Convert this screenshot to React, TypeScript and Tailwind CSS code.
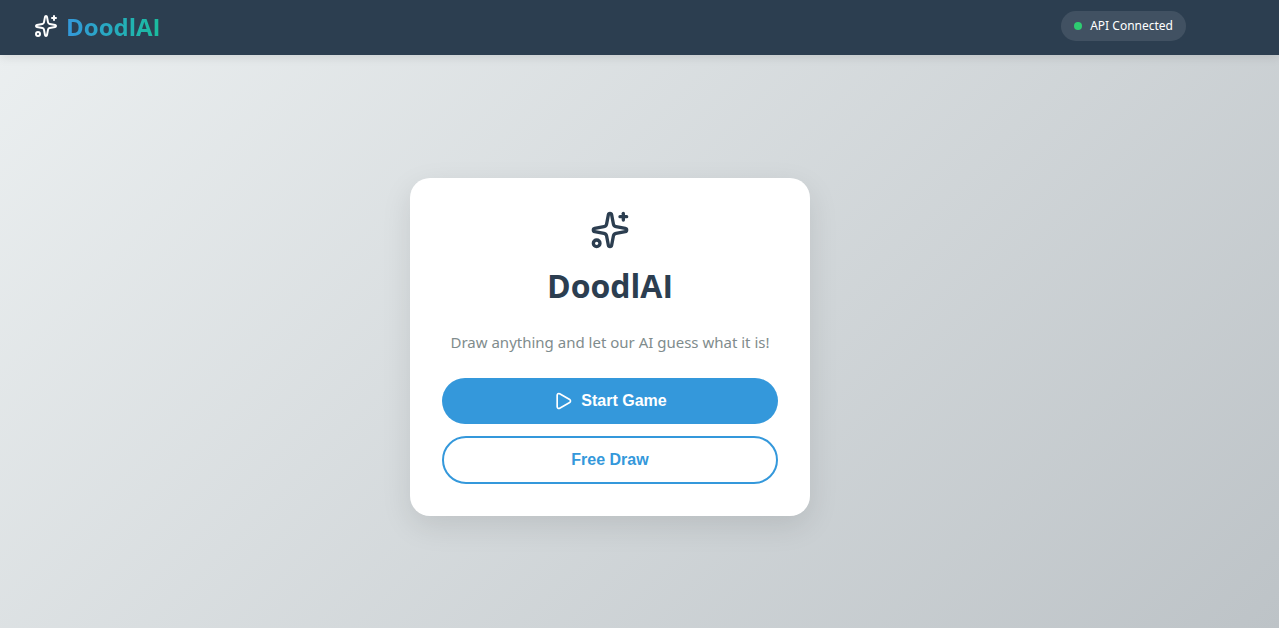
import { Play, Sparkles } from "lucide-react";

function Header() {
  return (
    <header className="relative flex h-[55px] items-center justify-between bg-[#2c3e50] pl-[34px] pr-[93px] pb-[3px] shadow-[0_2px_10px_rgba(0,0,0,0.1)]">
      <div className="flex items-center gap-2">
        <Sparkles size={24} className="text-white" aria-hidden="true" />
        <span className="bg-linear-to-r from-[#3498db] to-[#1abc9c] bg-clip-text pt-[2px] text-2xl font-bold text-transparent">
          DoodlAI
        </span>
      </div>
      <div className="flex h-[30px] items-center gap-2 rounded-full bg-white/10 px-[13px] font-['Noto_Sans',sans-serif] text-xs text-white">
        <span className="size-2 rounded-full bg-[#2ecc71]" />
        <span>API Connected</span>
      </div>
    </header>
  );
}

function WelcomeCard() {
  return (
    <section className="flex w-full max-w-[400px] flex-col items-center rounded-[20px] bg-white p-8 text-center shadow-[0_10px_30px_rgba(0,0,0,0.1)]">
      <Sparkles size={40} className="text-[#2c3e50]" aria-hidden="true" />
      <h1 className="mt-4 text-[32px] leading-10 font-bold text-[#2c3e50]">DoodlAI</h1>
      <p className="mt-6 text-[15px] leading-6 font-['Noto_Sans',sans-serif] text-[#7f8c8d]">
        Draw anything and let our AI guess what it is!
      </p>
      <div className="mt-6 flex w-full flex-col gap-3 font-['Liberation_Sans',Arial,sans-serif] text-base font-bold">
        <button
          type="button"
          className="flex h-[46px] w-full items-center justify-center gap-2 rounded-full bg-[#3498db] text-white"
        >
          <Play size={20} strokeWidth={2} aria-hidden="true" />
          Start Game
        </button>
        <button
          type="button"
          className="flex h-12 w-full items-center justify-center rounded-full border-2 border-[#3498db] bg-white text-[#3498db]"
        >
          Free Draw
        </button>
      </div>
    </section>
  );
}

export default function App() {
  return (
    <div className="flex min-h-screen flex-col bg-[linear-gradient(135deg,#ecf0f1_0%,#bdc3c7_100%)] font-['Open_Sans','Noto_Sans',sans-serif]">
      <Header />
      <main className="flex flex-1 items-center justify-center pt-[11px] pr-[59px]">
        <WelcomeCard />
      </main>
    </div>
  );
}
